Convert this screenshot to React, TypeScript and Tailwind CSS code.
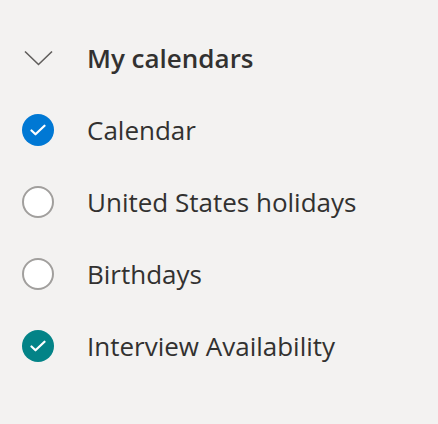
import React from 'react';

type Cal = { name: string; checked: boolean; color?: string };

const calendars: Cal[] = [
  { name: 'Calendar', checked: true, color: 'bg-[#0078d4]' },
  { name: 'United States holidays', checked: false },
  { name: 'Birthdays', checked: false },
  { name: 'Interview Availability', checked: true, color: 'bg-[#038387]' },
];

const Check = () => (
  <svg width="16" height="16" viewBox="0 0 16 16" fill="none">
    <path d="M1.5 8.5l4 3.8 9-8.6" stroke="white" strokeWidth="2.2" strokeLinecap="round" strokeLinejoin="round" />
  </svg>
);

const App: React.FC = () => {
  return (
    <div className="w-[438px] h-[424px] bg-[#f3f2f1] pt-[22px] text-[#323130]" style={{ fontFamily: '"Open Sans", "Noto Sans", sans-serif' }}>
      <div className="flex items-center h-[72px]">
        <div className="w-[87px] flex items-center pl-[24px]">
          <svg width="29" height="16" viewBox="0 0 29 16" fill="none">
            <path d="M1 1.5l13.5 13 13.5-13" stroke="#605e5c" strokeWidth="1.6" />
          </svg>
        </div>
        <span className="text-[26px] font-semibold">My calendars</span>
      </div>
      {calendars.map((c) => (
        <div key={c.name} className="flex items-center h-[72px]">
          <div className="w-[87px] flex items-center pl-[22px]">
            {c.checked ? (
              <div className={`w-[32px] h-[32px] rounded-full flex items-center justify-center ${c.color}`}>
                <Check />
              </div>
            ) : (
              <div className="w-[32px] h-[32px] rounded-full bg-white border-2 border-[#a19f9d]" />
            )}
          </div>
          <span className="text-[26px]">{c.name}</span>
        </div>
      ))}
    </div>
  );
};

export default App;
